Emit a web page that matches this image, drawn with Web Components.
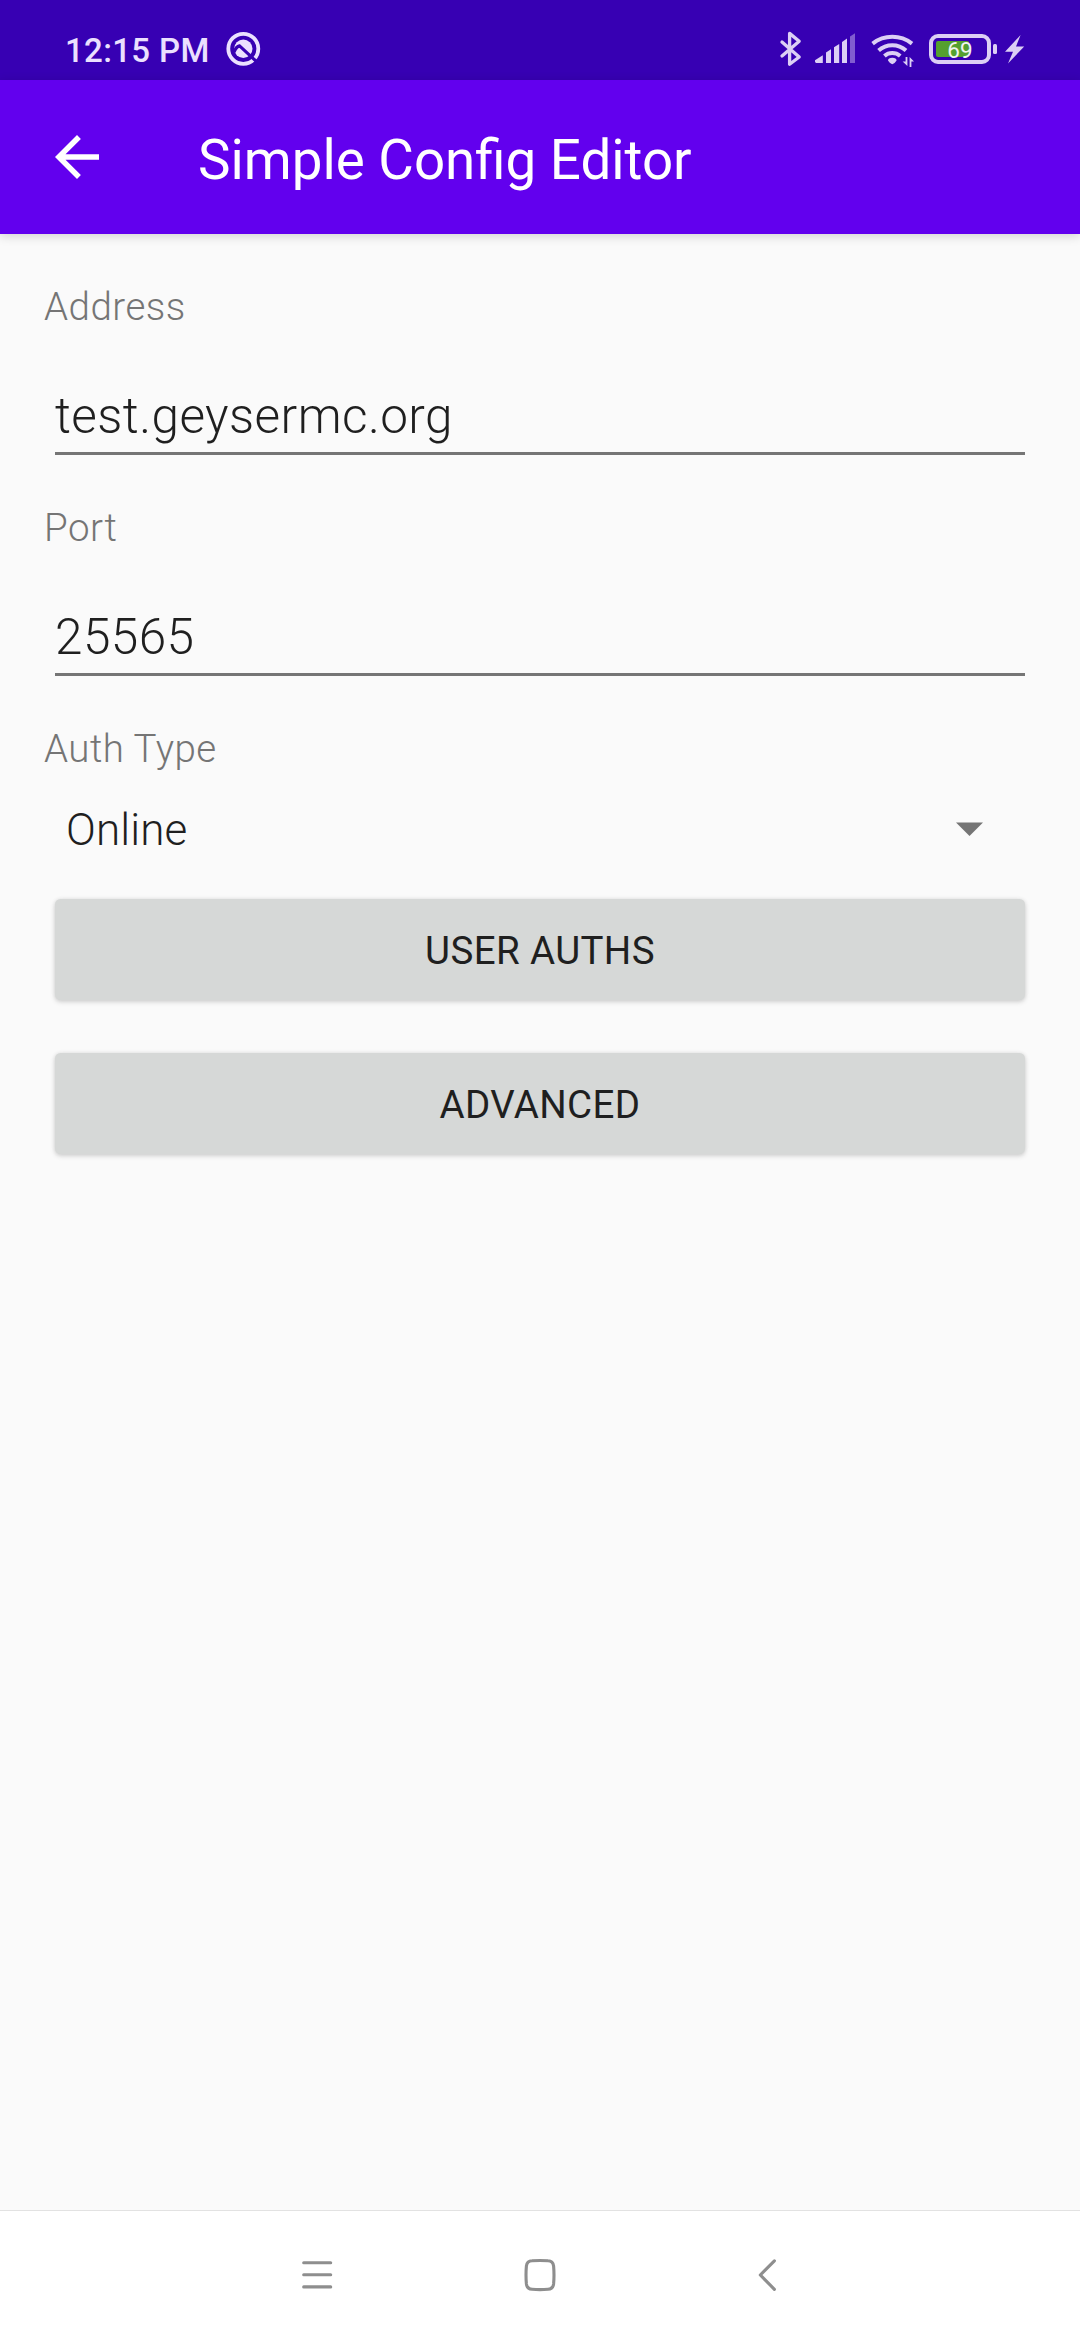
<!DOCTYPE html>
<html lang="en">
<head>
<meta charset="utf-8">
<title>Simple Config Editor</title>
<style>
  html, body { margin: 0; height: 100%; }
  body { background: #fafafa; font-family: Roboto, sans-serif; }
</style>
</head>
<body>
<config-screen></config-screen>
<script>
const define = (name, html) => {
  const template = document.createElement('template');
  template.innerHTML = html;
  customElements.define(name, class extends HTMLElement {
    constructor() {
      super();
      this.attachShadow({ mode: 'open' }).append(template.content.cloneNode(true));
    }
  });
};

define('battery-level', `
  <style>
    :host { display: flex; align-items: center; gap: 2px; height: 31px; }
    .shell { box-sizing: border-box; width: 62px; height: 30.5px; border: 4px solid #dccff5; border-radius: 9px; display: grid; align-items: center; padding: 0 3px; }
    .fill { grid-area: 1/1; width: 33px; height: 16px; background: #55a02f; border-radius: 2px; }
    .num { grid-area: 1/1; text-align: center; font: 400 22.5px/22px Roboto, sans-serif; color: #f0f5ef; z-index: 1; padding-top: 1px; }
    .tip { width: 4px; height: 10px; border-radius: 1.5px; background: #dccff5; }
  </style>
  <div class="shell"><div class="fill"></div><div class="num"><slot></slot></div></div>
  <div class="tip"></div>`);

define('status-bar', `
  <style>
    :host { display: flex; align-items: flex-start; height: 80px; background: #3700b3; padding: 0 54px 0 65px; box-sizing: border-box; }
    .time { font-weight: 500; font-size: 33px; line-height: 41px; letter-spacing: .35px; color: #ebe0ff; padding-top: 30px; width: 160px; white-space: nowrap; }
    svg { display: block; height: 80px; flex: none; }
    .right { margin-left: auto; display: flex; align-items: flex-start; }
    battery-level { margin: 33.5px 6px 0 0; }
  </style>
  <div class="time"><slot></slot></div>
  <svg width="40" viewBox="225 0 40 80" fill="none">
    <circle cx="243.3" cy="48.8" r="15" stroke="#ebe0ff" stroke-width="3.8"/>
    <circle cx="243.3" cy="48.8" r="9.2" fill="#ebe0ff"/>
    <path d="M234 52.2 Q236 46.8 239.6 45.9 L256.5 61.6" stroke="#3700b3" stroke-width="3.2"/>
  </svg>
  <div class="right">
    <svg width="30" viewBox="778 0 30 80" fill="none" stroke="#dccff5" stroke-width="3.3" stroke-linejoin="round" stroke-linecap="round">
      <path d="M782 42 L799.2 57 L789.6 64.2 V33.4 L799.2 41.2 L782 56"/>
    </svg>
    <svg width="62" viewBox="808 0 62 80" fill="#dccff5">
      <path d="M815 60.3 L822.8 55.3 V63 H816 Q814.6 62.4 815 60.3Z"/>
      <path d="M826 52.6 L831 49.3 V63 H826Z M834 47.3 L839.2 43.9 V63 H834Z M842 41.9 L847 38.6 V63 H842Z"/>
      <path d="M850 36.6 L855 33.3 V63 H850Z" opacity=".45"/>
    </svg>
    <svg width="59" viewBox="870 0 59 80" fill="none" stroke="#dccff5" stroke-width="4">
      <path d="M872.6 43.6 A32 32 0 0 1 912 43.6 M878.6 50.6 A20.5 20.5 0 0 1 906 50.6 M884.4 56 A12 12 0 0 1 900.2 56"/>
      <path d="M888 60.6 Q888.2 57.8 892.3 57.8 Q896.4 57.8 896.6 60.6 Q895 63.4 892.3 64.2 Q889.6 63.4 888 60.6Z" fill="#dccff5" stroke="none"/>
      <path d="M905.6 57 H907.4 V66 L902.6 61.4 H905.6Z M909.6 67 V57 L914 61.4 H911.4 V67Z" fill="#dccff5" stroke="none"/>
    </svg>
    <battery-level>69</battery-level>
    <svg width="23" viewBox="1003 0 23 80" fill="#dccff5">
      <path d="M1020.6 35 L1005 51.8 H1013 L1008 63.4 L1024.2 46.6 H1016Z"/>
    </svg>
  </div>`);

define('app-bar', `
  <style>
    :host { display: flex; align-items: center; height: 154px; box-sizing: border-box; background: #6200ee; color: #fff; padding-left: 44px; box-shadow: 0 2px 10px rgba(0,0,0,.16); position: relative; }
    svg { width: 66px; height: 66px; margin-right: 88px; }
    .title { font-size: 54.7px; line-height: 66px; padding-top: 6px; white-space: nowrap; }
  </style>
  <svg viewBox="0 0 24 24" fill="currentColor"><path d="M20 11H7.83l5.59-5.59L12 4l-8 8 8 8 1.41-1.41L7.83 13H20v-2z"/></svg>
  <div class="title"><slot></slot></div>`);

define('field-label', `
  <style>
    :host { display: block; font-weight: 320; font-size: 38.5px; line-height: 46px; letter-spacing: .48px; color: #757575; }
  </style>
  <slot></slot>`);

define('text-field', `
  <style>
    :host { display: block; }
    .value { margin: 56px 11px 50px; height: 66px; border-bottom: 3px solid #757575; font-weight: 320; font-size: 49.5px; line-height: 60px; letter-spacing: .42px; color: #1f1f1f; }
  </style>
  <field-label><slot name="label"></slot></field-label>
  <div class="value"><slot></slot></div>`);

define('select-field', `
  <style>
    :host { display: block; }
    .row { display: flex; align-items: center; justify-content: space-between; margin: 28px 53px 39px 22px; height: 60px; font-weight: 350; font-size: 44px; line-height: 60px; color: #1f1f1f; letter-spacing: .1px; }
    svg { display: block; width: 27px; height: 14px; margin-bottom: 2px; }
  </style>
  <field-label><slot name="label"></slot></field-label>
  <div class="row"><span><slot></slot></span><svg viewBox="0 0 27 14"><path d="M0 .4H27L13.5 13.9Z" fill="#757575"/></svg></div>`);

define('raised-button', `
  <style>
    :host { display: flex; align-items: center; justify-content: center; box-sizing: border-box; height: 101px; margin: 0 11px 53px; padding-top: 3px; border-radius: 5.5px; background: #d6d8d7; color: #1f1f1f; font-size: 38.5px; line-height: 46px; letter-spacing: .38px; box-shadow: 0 2px 5px rgba(0,0,0,.15), 0 0 4px rgba(0,0,0,.08); }
  </style>
  <slot></slot>`);

define('nav-bar', `
  <style>
    :host { display: flex; justify-content: space-between; height: 130px; box-sizing: border-box; border-top: 1px solid #e2e2e2; background: #fff; padding: 0 296px; }
    svg { display: block; width: 44px; height: 128px; fill: none; stroke: #8e8e8e; stroke-width: 3.1; stroke-linecap: round; stroke-linejoin: round; }
  </style>
  <svg viewBox="296 2211 44 128"><path d="M303.7 2262.7H330.7M303.7 2274.7H330.7M303.7 2286.9H330.7"/></svg>
  <svg viewBox="518 2211 44 128"><path d="M532 2260.8 Q540 2260.2 548 2260.8 Q553 2261 553.6 2266 Q554.4 2275 553.6 2284 Q553 2289 548 2289.3 Q540 2289.9 532 2289.3 Q527 2289 526.4 2284 Q525.6 2275 526.4 2266 Q527 2261 532 2260.8Z"/></svg>
  <svg viewBox="740 2211 44 128"><path d="M774.4 2260.8 L760.3 2275 L774.4 2289.3"/></svg>`);

define('config-screen', `
  <style>
    :host { display: flex; flex-direction: column; width: 1080px; height: 2340px; background: #fafafa; overflow: hidden; }
    main { flex: 1; padding: 50px 44px 0; }
  </style>
  <status-bar>12:15 PM</status-bar>
  <app-bar>Simple Config Editor</app-bar>
  <main>
    <text-field><span slot="label">Address</span>test.geysermc.org</text-field>
    <text-field><span slot="label">Port</span>25565</text-field>
    <select-field><span slot="label">Auth Type</span>Online</select-field>
    <raised-button>USER AUTHS</raised-button>
    <raised-button>ADVANCED</raised-button>
  </main>
  <nav-bar></nav-bar>`);
</script>
</body>
</html>
